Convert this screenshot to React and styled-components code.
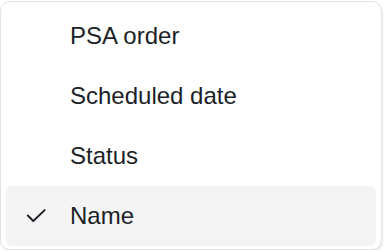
import React from 'react'
import styled, { createGlobalStyle } from 'styled-components';

const Global = createGlobalStyle`
    html, body {
        margin: 0;
        padding: 0;
        background: #ffffff;
    }
    body {
        font-family: "Liberation Sans", Arial, sans-serif;
    }
`;

const Menu = styled.div`
    box-sizing: border-box;
    width: 382px;
    height: 249px;
    margin: 1px 0 0 0;
    padding: 4px 5px;
    background: #ffffff;
    border: 1px solid #e3e3e3;
    border-radius: 10px;
    box-shadow: 1px 2px 2px rgba(0, 0, 0, 0.08);
    display: flex;
    flex-direction: column;
`;

const Item = styled.div`
    height: 60px;
    flex-shrink: 0;
    display: flex;
    align-items: center;
    padding-left: 20px;
    border-radius: 5px;
    background: ${p => (p.$selected ? '#f4f4f4' : 'transparent')};
    color: #1c1f27;
    font-size: 24px;
    cursor: pointer;
`;

const CheckSlot = styled.span`
    width: 20px;
    height: 16px;
    margin-right: 24px;
    display: flex;
    align-items: center;
    justify-content: center;
`;

const Check = () => (
    <svg width="22" height="16" viewBox="0 0 22 16" fill="none">
        <polyline points="2,7.5 8,13.5 20.5,1.5" stroke="#1c1f27" strokeWidth="2.1" strokeLinecap="round" strokeLinejoin="round" />
    </svg>
);

const options = ['PSA order', 'Scheduled date', 'Status', 'Name'];

const App = () => {
    const selected = 'Name';
    return (
        <>
            <Global />
            <Menu>
                {options.map(o => (
                    <Item key={o} $selected={o === selected}>
                        <CheckSlot>{o === selected && <Check />}</CheckSlot>
                        {o}
                    </Item>
                ))}
            </Menu>
        </>
    )
}

export default App
